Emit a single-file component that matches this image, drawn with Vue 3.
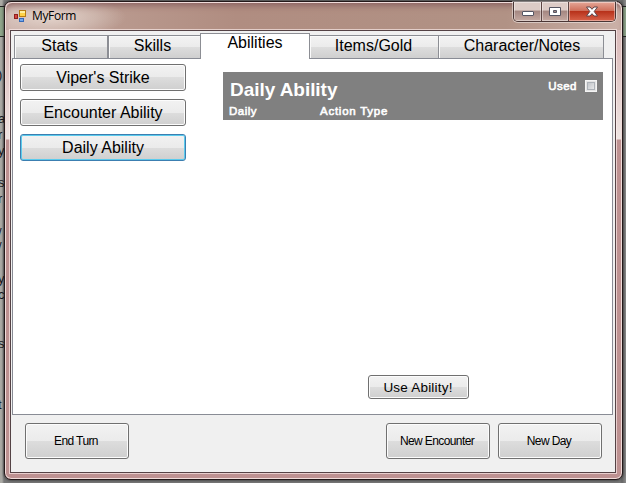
<script setup>
import { ref } from 'vue'
const tabs = [
  { name: 'Stats', cls: 'stats' },
  { name: 'Skills', cls: 'skills' },
  { name: 'Abilities', cls: 'abilities' },
  { name: 'Items/Gold', cls: 'items' },
  { name: 'Character/Notes', cls: 'notes' },
]
const activeTab = ref('Abilities')
const abilities = ["Viper's Strike", 'Encounter Ability', 'Daily Ability']
const selected = ref('Daily Ability')
const fragments = [
  { t: ')', y: 67 }, { t: 'a', y: 111 }, { t: 'r', y: 127 }, { t: 'y', y: 143 },
  { t: 's', y: 175 }, { t: 'r', y: 191 }, { t: '/', y: 225 }, { t: '/', y: 239 },
  { t: 'y', y: 271 }, { t: 'c', y: 287 }, { t: 's', y: 336 }, { t: 't', y: 397 },
]
</script>

<template>
  <div class="desktop">
    <span v-for="f in fragments" :key="f.y" class="fragment" :style="{ top: f.y + 'px' }">{{ f.t }}</span>
    <section class="window">
      <header class="titlebar">
        <svg class="app-icon" width="14" height="14" viewBox="0 0 14 14">
          <rect x="6.5" y="1.5" width="6" height="6" fill="#ffd348" stroke="#b77b12" />
          <path d="M7 2h5v2H7z" fill="#fff0a0" />
          <rect x="1.5" y="5.5" width="3" height="4" fill="#d5453f" stroke="#8f201e" />
          <rect x="6.500" y="9.5" width="4" height="3" fill="#71a8ee" stroke="#3569b7" />
        </svg>
        <span class="title">MyForm</span>
        <div class="controls">
          <button class="ctl min" aria-label="Minimize">
            <svg width="14" height="14"><rect x="1.5" y="6.5" width="11" height="4" rx=".5" fill="#fff" stroke="#555562" /></svg>
          </button>
          <button class="ctl max" aria-label="Maximize">
            <svg width="14" height="14"><path d="M1.5 2.5h11v8h-11zM5.5 5.5v2h3v-2z" fill="#fff" fill-rule="evenodd" stroke="#555562" /></svg>
          </button>
          <button class="ctl close" aria-label="Close">
            <svg width="14" height="14"><path d="M1.500 2H5l2 2.300L9 2h3.500L9.200 6.500l3.300 4.500H9L7 8.700 5 11H1.500l3.300-4.500z" fill="#fff" stroke="#5e4549" /></svg>
          </button>
        </div>
      </header>
      <main class="client">
        <nav class="tabs">
          <button v-for="t in tabs" :key="t.name" class="tab" :class="[t.cls, { active: activeTab === t.name }]" @click="activeTab = t.name">{{ t.name }}</button>
        </nav>
        <div class="page">
          <div class="ability-list">
            <button v-for="a in abilities" :key="a" class="btn ability" :class="{ focused: selected === a }" @click="selected = a">{{ a }}</button>
          </div>
          <div class="detail">
            <div class="card">
              <div class="card-top">
                <h1>{{ selected }}</h1>
                <label class="used">Used<span class="check"></span></label>
              </div>
              <div class="card-meta"><span class="freq">Daily</span><span>Action Type</span></div>
            </div>
            <button class="btn use">Use Ability!</button>
          </div>
        </div>
        <footer class="actions">
          <button class="btn action">End Turn</button>
          <span class="spacer"></span>
          <button class="btn action">New Encounter</button>
          <button class="btn action">New Day</button>
        </footer>
      </main>
    </section>
  </div>
</template>

<style>
body { margin: 0; overflow: hidden; }
</style>
<style scoped>
* { box-sizing: border-box; }
button { margin: 0; padding: 0; color: #000; font-family: "Liberation Sans", Arial, sans-serif; }
.desktop {
  position: relative; width: 626px; height: 483px; padding: 1px 3px 3px 4px; overflow: hidden;
  background:
    linear-gradient(#222, #222) 0 6px / 100% 1px no-repeat,
    linear-gradient(#222, #222) 0 36px / 100% 1px no-repeat,
    linear-gradient(#8fa58a, #8fa58a) 0 7px / 100% 29px no-repeat,
    linear-gradient(90deg, #aaa9a4 0 2px, #777 4px, #777 620px, #666 622px, #8b8b8b 626px);
}
.fragment {
  position: absolute; left: -2px;
  font: 13px/16px "Liberation Sans", Arial, sans-serif; color: #15151c;
}
.window {
  position: relative; width: 619px; height: 479px; padding: 0 5px 6px; border: 1px solid #231819; border-radius: 7px;
  box-shadow: inset 0 0 0 1px #f0dcda, 0 0 3px #222;
  background: linear-gradient(#d6b9b9 0, #dcbfbe 50px, #eee4e2 137px, #bd9191 138px, #bd9191 100%);
}
.titlebar {
  display: flex; align-items: flex-start; height: 27px; margin: 0 -4px; padding-left: 7px;
  margin-top: 1px; border-radius: 6px 6px 0 0;
  background:
    radial-gradient(ellipse 75px 22px at 45px 14px, rgba(238,226,218,.75), rgba(220,204,195,.5) 60%, transparent),
    linear-gradient(90deg, #cbb0aa, #b9998e 110px, #b08d81 230px, #b19285 500px, #cbb1a8 100%);
  box-shadow: inset 0 6px 7px -4px #875f5e;
}
.app-icon { margin-top: 6px; }
.title { margin: 5px 0 0 5px; font: 12px/16px "Open Sans", "Noto Sans", sans-serif; letter-spacing: -.35px; }
.controls { display: flex; margin: -1px 5px 0 auto; height: 20px; border: 1px solid #4a3635; border-top: 0; border-radius: 0 0 5px 5px; overflow: hidden; box-shadow: 0 0 0 1px rgba(255,255,255,.45); }
.ctl { display: flex; align-items: center; justify-content: center; border: 0; height: 19px; box-shadow: inset 0 0 0 1px rgba(255,255,255,.4); background: linear-gradient(#dccbc6 0 40%, #a58882 50%, #c5aaa2); }
.min { width: 28px; border-right: 1px solid #5c4543; }
.max { width: 27px; border-right: 1px solid #5c4543; }
.close { width: 46px; background: linear-gradient(#e5a797 0, #cf705c 45%, #b8321b 50%, #d8634a); }
.ctl svg { flex: none; }
.client {
  width: 606px; height: 443px; padding: 2px 2px 0 1px; border: 1px solid #544245;
  background: #f0f0f0; box-shadow: 0 0 0 1px rgba(255,240,238,.65);
}
.tabs { display: flex; align-items: flex-end; height: 25px; padding-left: 2px; }
.tab { height: 23px; font-size: 16px; line-height: 18px; padding-bottom: 3px; border: 1px solid #8c8e94; border-bottom: 0; background: linear-gradient(#f3f3f3 0, #ebebeb 50%, #dddddd 51%, #cfcfcf 100%); box-shadow: inset 1px 1px #fafafa; }
.stats { width: 94px; padding-right: 3px; }
.skills { width: 92px; border-right: 0; padding-right: 4px; }
.abilities { width: 110px; }
.items { width: 129px; border-left: 0; padding-right: 1px; }
.notes { width: 165px; border-left: 0; padding-left: 2px; }
.tab.active { height: 26px; margin-bottom: -1px; position: relative; background: #fff; box-shadow: none; padding-bottom: 7px; }
.page { display: flex; width: 601px; height: 357px; padding: 5px 8px 0 7px; border: 1px solid #898c95; background: #fff; }
.ability-list { display: flex; flex-direction: column; gap: 8px; width: 166px; }
.btn { border: 1px solid #707070; border-radius: 3px; background: linear-gradient(#f2f2f2 0, #ebebeb 50%, #dddddd 50%, #cfcfcf 100%); box-shadow: inset 0 0 0 1px #fcfcfc; }
.ability { height: 27px; font-size: 16px; line-height: 24px; }
.focused { border-color: #3c7fb1; box-shadow: inset 0 0 0 1px #5bcbed; }
.detail { display: flex; flex-direction: column; flex: none; width: 380px; margin: 8px 0 15px 37px; }
.card { height: 48px; padding: 5px 6px 0; background: #808080; color: #fff; font-family: "Liberation Sans", Arial, sans-serif; }
.card-top { display: flex; justify-content: space-between; height: 27px; }
h1 { margin: 0 0 0 1px; font-size: 19px; line-height: 25px; font-weight: 700; letter-spacing: -.05px; }
.used { display: flex; align-items: center; gap: 8px; height: 17px; font-size: 11.5px; letter-spacing: .5px; -webkit-text-stroke: .6px #fff; }
.check { width: 12px; height: 12px; border: 1px solid #f4f4f4; background: linear-gradient(135deg, #b6bac0, #f3f3f3); box-shadow: inset 0 0 0 1px #e5e5e5, inset 0 0 0 2px #adb2b8; }
.card-meta { display: flex; font-size: 11.5px; line-height: 14px; letter-spacing: .75px; -webkit-text-stroke: .6px #fff; }
.freq { width: 91px; letter-spacing: .5px; }
.use { width: 101px; height: 24px; margin: auto 0 0 145px; font-size: 13.5px; line-height: 21px; letter-spacing: .2px; padding-right: 1px; }
.actions { display: flex; gap: 8px; padding: 8px 11px 0 13px; }
.spacer { flex: 1; }
.action { width: 104px; height: 36px; font-size: 12px; letter-spacing: -.6px; padding-right: 2px; }
</style>
